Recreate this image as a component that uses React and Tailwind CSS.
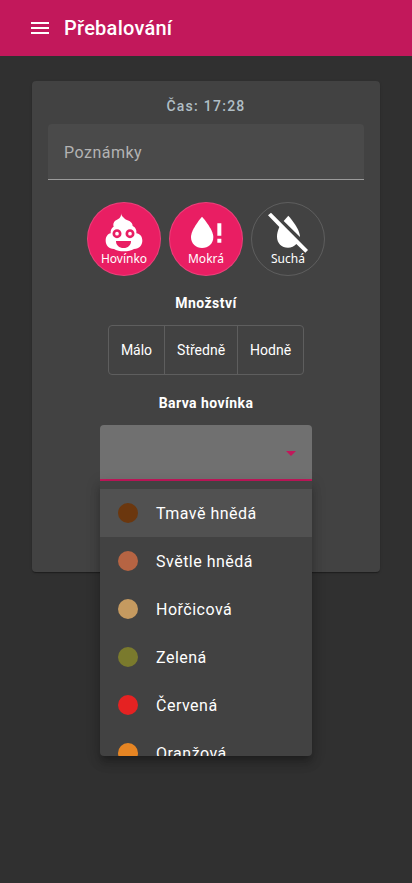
import { MdMenu } from "react-icons/md";

const colors = [
  { name: "Tmavě hnědá", dot: "bg-[#6b370e]" },
  { name: "Světle hnědá", dot: "bg-[#b66443]" },
  { name: "Hořčicová", dot: "bg-[#c59a60]" },
  { name: "Zelená", dot: "bg-[#7a7a2d]" },
  { name: "Červená", dot: "bg-[#e52222]" },
  { name: "Oranžová", dot: "bg-[#e68523]" },
];

function PoopIcon() {
  return (
    <svg viewBox="76 53 114 117" className="h-[39px] w-[38px]" aria-hidden="true">
      <path
        fill="#fff"
        d="M124 54C124 62 132 66 136 71C141 76 159 76 159 92C166 95 172 103 170 114C181 115 188 124 188 136C188 149 179 160 163 161C155 166 145 168 133 168C121 168 110 166 103 161C87 160 78 149 78 136C78 124 84 116 93 114C92 104 96 97 102 94C99 84 104 76 112 73C119 70 125 66 124 54Z"
      />
      <circle cx="112" cy="115" r="9.5" fill="none" stroke="#e91e63" strokeWidth="8" />
      <circle cx="151" cy="115" r="9.5" fill="none" stroke="#e91e63" strokeWidth="8" />
      <path fill="#e91e63" d="M109 137H154C154 150 145 158 132 158C118 158 109 150 109 137Z" />
    </svg>
  );
}

function WaterAlertIcon() {
  return (
    <svg viewBox="74 62 96 99" className="h-[33px] w-[32px]" aria-hidden="true">
      <path fill="#fff" d="M110 64C110 64 77 101 77 125C77 145 92 158 110 158C129 158 144 145 144 125C144 101 110 64 110 64Z" />
      <path fill="#fff" d="M156 84H168V121H156ZM156 130H168V142H156Z" />
    </svg>
  );
}

function WaterOffIcon() {
  return (
    <svg viewBox="66 52 126 123" className="h-[41px] w-[42px]" aria-hidden="true">
      <path fill="#fff" d="M78 54L189 166L181 174L154 148C148 155 139 159 129 159C110 159 96 145 96 126C96 117 98 109 103 97L69 62Z" />
      <path fill="#fff" d="M130 63C130 63 165 101 165 127L116 79Z" />
    </svg>
  );
}

function RoundButton({ label, active, children }) {
  return (
    <button
      type="button"
      aria-pressed={active}
      className={
        "flex size-[74px] flex-col items-center rounded-full border border-white/15 pt-[7px] font-['Noto_Sans',sans-serif] text-xs text-white " +
        (active ? "bg-[#e91e63]" : "")
      }
    >
      <span className="flex h-11 items-center justify-center">{children}</span>
      <span className="-mt-[3px] leading-4">{label}</span>
    </button>
  );
}

export default function App() {
  return (
    <div className="min-h-screen bg-[#303030] font-[Roboto,sans-serif] text-white">
      <header className="flex h-14 items-center gap-3 bg-[#c2185b] px-7">
        <button type="button" aria-label="Menu">
          <MdMenu className="size-6" />
        </button>
        <h1 className="text-xl font-medium tracking-[0.0125em]">Přebalování</h1>
      </header>

      <main className="px-8 pt-[25px]">
        <form className="flex min-h-[491px] flex-col items-center rounded bg-[#424242] px-4 pt-[15px] shadow-[0_2px_1px_-1px_rgba(0,0,0,0.2),0_1px_1px_0_rgba(0,0,0,0.14),0_1px_3px_0_rgba(0,0,0,0.12)]">
          <button type="button" className="text-sm font-medium tracking-[0.09em] text-[#b0bec5]">
            Čas: 17:28
          </button>

          <input
            type="text"
            aria-label="Poznámky"
            placeholder="Poznámky"
            className="mt-2 h-14 w-full rounded-t border-b border-[#9b9b9b] bg-[#4a4a4a] px-4 pt-0.5 tracking-[0.03125em] outline-none placeholder:text-[#b3b3b3]"
          />

          <div className="mt-[22px] flex gap-2">
            <RoundButton label="Hovínko" active>
              <PoopIcon />
            </RoundButton>
            <RoundButton label="Mokrá" active>
              <WaterAlertIcon />
            </RoundButton>
            <RoundButton label="Suchá" active={false}>
              <WaterOffIcon />
            </RoundButton>
          </div>

          <h2 className="mt-[17px] text-sm font-bold tracking-[0.03125em]">Množství</h2>
          <div role="group" aria-label="Množství" className="mt-3 flex divide-x divide-[#5e5e5e] rounded border border-[#5e5e5e] text-sm">
            <button type="button" className="h-12 px-3">Málo</button>
            <button type="button" className="h-12 px-3">Středně</button>
            <button type="button" className="h-12 px-3">Hodně</button>
          </div>

          <label htmlFor="color" className="mt-[18px] text-sm font-bold tracking-[0.03125em]">
            Barva hovínka
          </label>
          <div className="relative mt-3 w-[212px]">
            <select
              id="color"
              defaultValue=""
              className="block h-14 w-full appearance-none rounded-t border-b-2 border-[#c2185b] bg-[#707070] px-4 outline-none"
            >
              <option value="" />
              {colors.map((color) => (
                <option key={color.name}>{color.name}</option>
              ))}
            </select>
            <svg viewBox="0 0 10 5" className="pointer-events-none absolute top-[26px] right-4 h-[5px] w-[10px]" aria-hidden="true">
              <path fill="#c2185b" d="M0 0H10L5 5Z" />
            </svg>

            <ul
              role="listbox"
              aria-label="Barva hovínka"
              className="absolute inset-x-0 top-full z-10 h-[275px] overflow-hidden rounded-b bg-[#424242] pt-2 shadow-[0_5px_5px_-3px_rgba(0,0,0,0.2),0_8px_10px_1px_rgba(0,0,0,0.14),0_3px_14px_2px_rgba(0,0,0,0.12)]"
            >
              {colors.map((color, index) => (
                <li
                  key={color.name}
                  role="option"
                  aria-selected={index === 0}
                  className={"flex h-12 items-center gap-[18px] pl-[18px] tracking-[0.03125em] " + (index === 0 ? "bg-[#515151]" : "")}
                >
                  <span className={"size-5 rounded-full " + color.dot} />
                  <span className="pt-0.5">{color.name}</span>
                </li>
              ))}
            </ul>
          </div>
        </form>
      </main>
    </div>
  );
}
